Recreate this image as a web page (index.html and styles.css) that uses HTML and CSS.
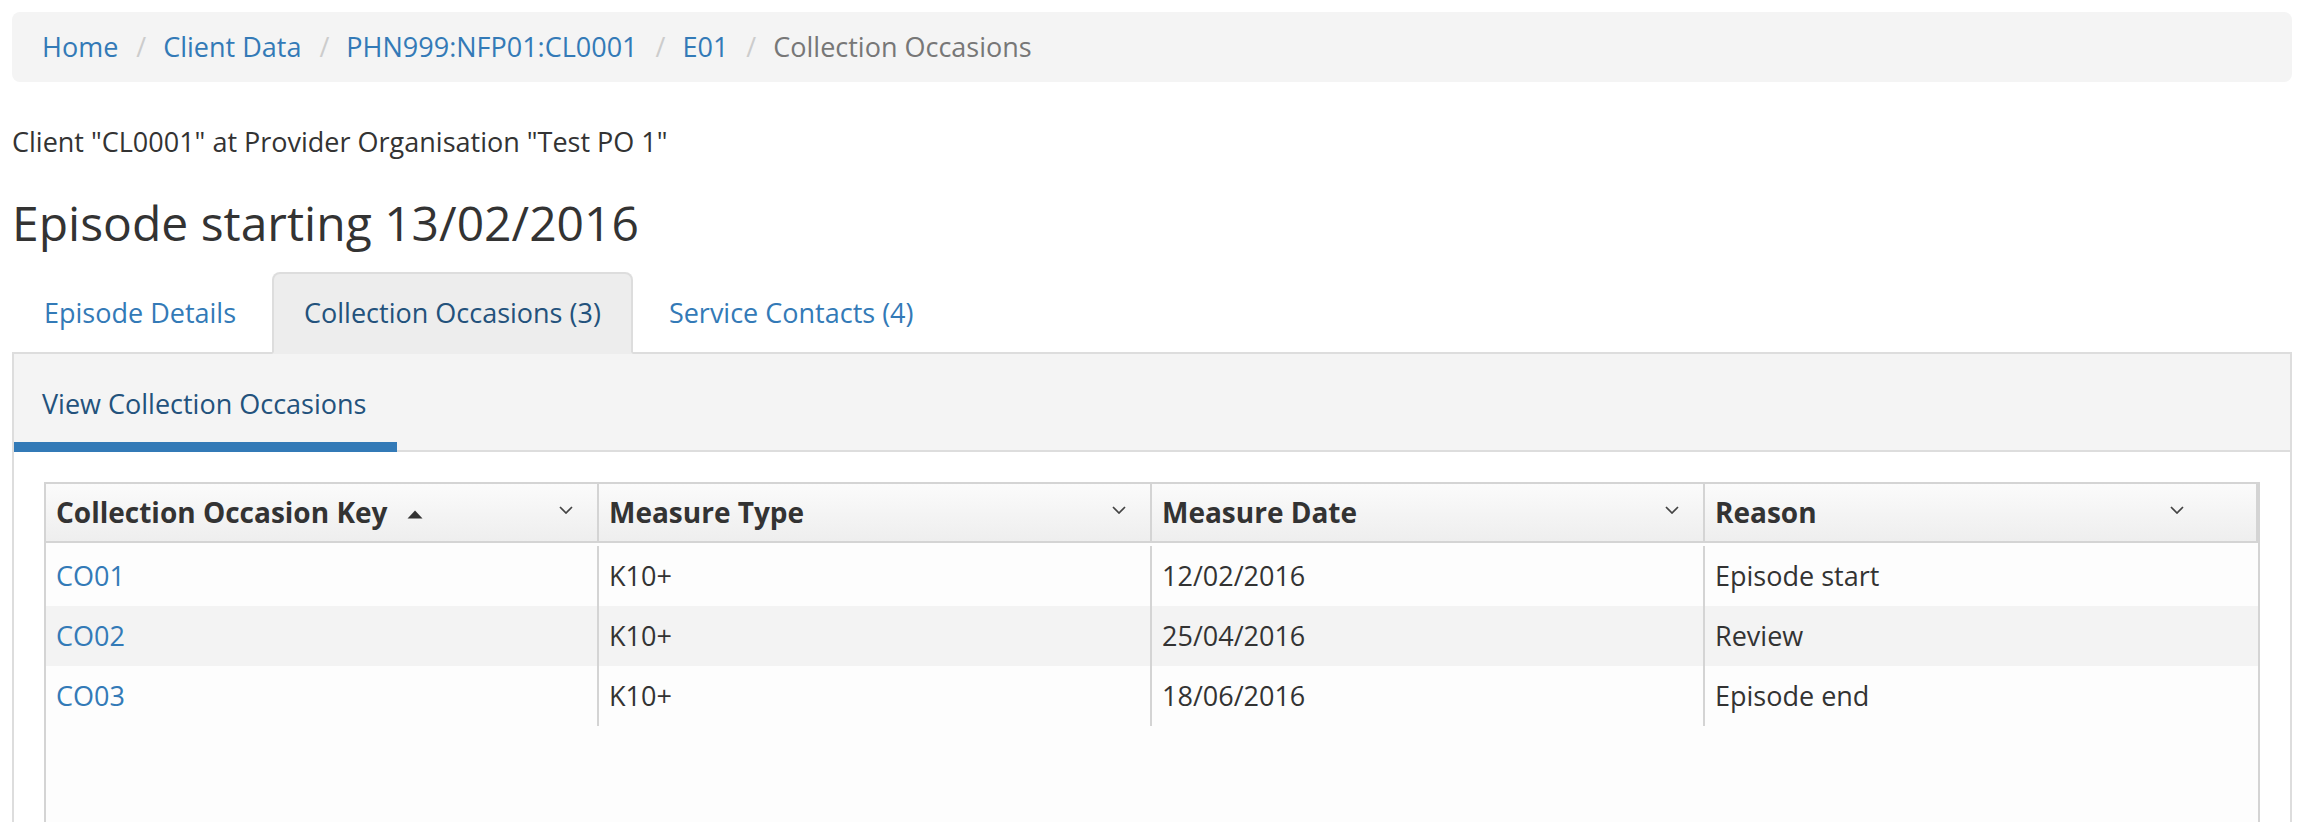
FILE: index.html
```html
<!DOCTYPE html>
<html lang="en">
<head>
<meta charset="utf-8">
<title>Collection Occasions</title>
<link rel="stylesheet" href="styles.css">
</head>
<body>
<div class="page">
  <nav class="breadcrumb">
    <a class="crumb" href="#">Home</a><span class="sep">/</span>
    <a class="crumb" href="#">Client Data</a><span class="sep">/</span>
    <a class="crumb" href="#">PHN999:NFP01:CL0001</a><span class="sep">/</span>
    <a class="crumb" href="#">E01</a><span class="sep">/</span>
    <span class="crumb current">Collection Occasions</span>
  </nav>

  <p class="client">Client "CL0001" at Provider Organisation "Test PO 1"</p>

  <h3 class="title">Episode starting 13/02/2016</h3>

  <ul class="tabs">
    <li class="tab"><a href="#">Episode Details</a></li>
    <li class="tab active"><a href="#">Collection Occasions (3)</a></li>
    <li class="tab"><a href="#">Service Contacts (4)</a></li>
  </ul>

  <div class="panel">
    <div class="subnav">
      <span class="subtab">View Collection Occasions</span>
    </div>
    <div class="panel-body">
      <div class="grid">
        <div class="grid-header">
          <div class="hcell">
            <span class="htitle">Collection Occasion Key</span>
            <svg class="sort" width="16" height="9" viewBox="0 0 16 9"><path d="M8 0.5L15.5 8.5H0.5z" fill="#333"/></svg>
            <svg class="chev" width="14" height="8" viewBox="0 0 14 8"><path d="M1 1l6 6 6-6" fill="none" stroke="#444" stroke-width="1.7"/></svg>
          </div>
          <div class="hcell">
            <span class="htitle">Measure Type</span>
            <svg class="chev" width="14" height="8" viewBox="0 0 14 8"><path d="M1 1l6 6 6-6" fill="none" stroke="#444" stroke-width="1.7"/></svg>
          </div>
          <div class="hcell">
            <span class="htitle">Measure Date</span>
            <svg class="chev" width="14" height="8" viewBox="0 0 14 8"><path d="M1 1l6 6 6-6" fill="none" stroke="#444" stroke-width="1.7"/></svg>
          </div>
          <div class="hcell last">
            <span class="htitle">Reason</span>
            <svg class="chev" width="14" height="8" viewBox="0 0 14 8"><path d="M1 1l6 6 6-6" fill="none" stroke="#444" stroke-width="1.7"/></svg>
          </div>
        </div>
        <div class="grid-body">
          <div class="grid-row">
            <div class="cell"><a href="#">CO01</a></div>
            <div class="cell">K10+</div>
            <div class="cell">12/02/2016</div>
            <div class="cell">Episode start</div>
          </div>
          <div class="grid-row">
            <div class="cell"><a href="#">CO02</a></div>
            <div class="cell">K10+</div>
            <div class="cell">25/04/2016</div>
            <div class="cell">Review</div>
          </div>
          <div class="grid-row">
            <div class="cell"><a href="#">CO03</a></div>
            <div class="cell">K10+</div>
            <div class="cell">18/06/2016</div>
            <div class="cell">Episode end</div>
          </div>
        </div>
      </div>
    </div>
  </div>
</div>
</body>
</html>
```
FILE: styles.css
```css
* { box-sizing: border-box; }

html, body {
  margin: 0;
  padding: 0;
  background: #ffffff;
}

body {
  font-family: "Open Sans", "Liberation Sans", sans-serif;
  font-size: 27px;
  line-height: 40px;
  color: #333333;
}

a { color: #337ab7; text-decoration: none; }

.page {
  padding: 12px 16px 0 12px;
}

/* Breadcrumb */
.breadcrumb {
  display: flex;
  align-items: center;
  height: 70px;
  padding: 15px 30px;
  margin: 0 0 40px;
  background: #f4f4f4;
  border-radius: 8px;
}

.sep {
  color: #cccccc;
  padding: 0 17px 0 18px;
}

.current { color: #777777; }

/* Client line + heading */
.client {
  margin: 0;
  line-height: 40px;
}

.title {
  margin: 35px 0 22px;
  font-size: 48px;
  line-height: 52.8px;
  font-weight: 400;
  color: #333333;
}

/* Tabs */
.tabs {
  display: flex;
  list-style: none;
  margin: 0 0 -2px;
  padding: 0;
  position: relative;
  z-index: 1;
}

.tab a {
  display: block;
  padding: 19px 30px;
  line-height: 40px;
  margin-right: 4px;
  border: 2px solid transparent;
  border-radius: 8px 8px 0 0;
  color: #337ab7;
}

.tab.active a {
  background: #ededed;
  border-color: #dddddd;
  border-bottom-color: transparent;
  color: #23527c;
}

/* Panel */
.panel {
  border: 2px solid #dddddd;
  border-bottom: none;
}

.subnav {
  display: flex;
  background: #f4f4f4;
  border-bottom: 2px solid #dddddd;
}

.subtab {
  display: block;
  padding: 30px 31px 18px 28px;
  line-height: 40px;
  border-bottom: 10px solid #337ab7;
  margin-bottom: -2px;
  color: #23527c;
}

.panel-body {
  padding: 30px 30px 0;
  background: #ffffff;
}

/* Grid */
.grid {
  border: 2px solid #d4d4d4;
  border-bottom: none;
  background: #fdfdfd;
}

.grid-header {
  display: grid;
  grid-template-columns: repeat(4, 1fr);
  background: linear-gradient(to bottom, #fbfbfb, #eeeeee);
  border-bottom: 2px solid #d4d4d4;
}

.hcell {
  display: flex;
  align-items: center;
  height: 57px;
  padding: 0 10px;
  border-right: 2px solid #d4d4d4;
  font-size: 28px;
  font-weight: 700;
  line-height: 57px;
  color: #333333;
}

.sort {
  margin-left: 20px;
  margin-top: 5px;
}

.chev {
  margin-left: auto;
  margin-right: 14px;
  margin-bottom: 5px;
}

.hcell.last .chev {
  margin-right: 62px;
}

.grid-body {
  padding-top: 3px;
  height: 340px;
  background: #fdfdfd;
}

.grid-row {
  display: grid;
  grid-template-columns: repeat(4, 1fr);
  height: 60px;
  background: #fdfdfd;
}

.grid-row:nth-child(even) {
  background: #f3f3f3;
}

.cell {
  padding: 0 10px;
  line-height: 60px;
  border-right: 2px solid #d4d4d4;
  white-space: nowrap;
}

.cell:last-child {
  border-right: none;
}
```
